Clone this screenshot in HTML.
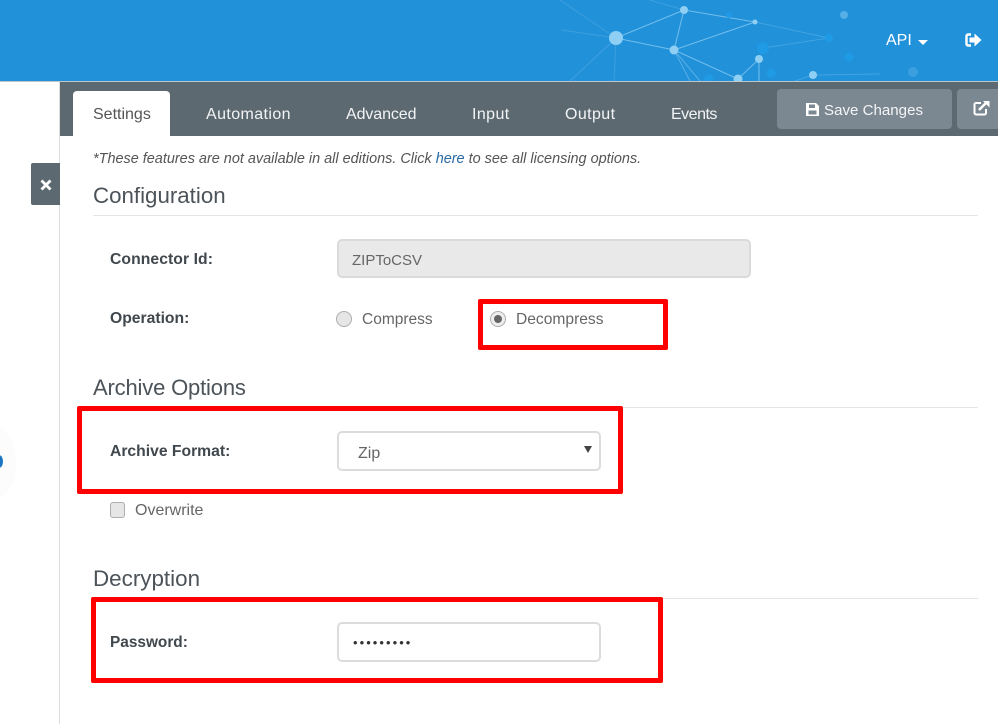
<!DOCTYPE html>
<html><head><meta charset="utf-8">
<style>
html,body{margin:0;padding:0;background:#fff}
#p{position:relative;width:998px;height:724px;overflow:hidden;background:#fff;font-family:"Liberation Sans",sans-serif;color:#555;filter:blur(.3px)}
#p div{position:absolute;box-sizing:border-box}
.t{white-space:nowrap;line-height:20px;font-size:16px}
.tab{color:#f2f4f5;top:105px}
.h{font-size:22px;line-height:26px;color:#4c5359;left:93px;white-space:nowrap}
.r{left:93px;width:885px;height:1px;background:#e2e4e6}
.b{font-weight:bold;color:#40474d;left:110px;font-size:15.7px;white-space:nowrap;line-height:20px}
.red{border:5px solid #fe0000;border-radius:2px}
.i{background:#fff;border:2px solid #dcdcdc;border-radius:5px}
</style></head><body>
<div id="p">
<div style="left:0;top:0;width:998px;height:81px;background:#2191d9"></div>
<svg style="position:absolute;left:0;top:0" width="998" height="81" viewBox="0 0 998 81">
<g stroke="#8fcdf2" fill="none">
<path d="M616 38L684 10L755 22L674 50L616 38M684 10L674 50L738 79M738 79L759 59V81" opacity=".75"/>
<path d="M674 50L690 81M674 50L700 81" opacity=".5"/>
<path d="M560 0L616 38L570 81M616 38L614 81M616 38L562 30M650 0L684 10" opacity=".25"/>
<path d="M763 48L829 38M813 75L880 74M813 75L795 81M755 22L829 38" opacity=".3"/>
</g>
<g fill="#1f9be6"><circle cx="763" cy="48" r="6"/><circle cx="771" cy="73" r="4.5"/><circle cx="729" cy="15" r="3"/><circle cx="709" cy="79" r="4.5"/><circle cx="829" cy="38" r="4"/><circle cx="849" cy="57" r="4.5"/></g>
<g fill="#8fcff3"><circle cx="616" cy="38" r="7"/><circle cx="684" cy="10" r="4"/><circle cx="755" cy="22" r="2.500"/><circle cx="674" cy="50" r="4.500"/><circle cx="738" cy="79" r="4.500"/><circle cx="759" cy="59" r="4"/><circle cx="813" cy="75" r="4"/></g>
<circle cx="844" cy="15" r="4" fill="#55aee6"/><circle cx="913" cy="72" r="5" fill="#3b9fdf"/>
</svg>
<div class="t" style="left:886px;top:31px;color:#fff">API</div>
<div style="left:918px;top:40px;width:0;height:0;border:5px solid transparent;border-top-color:#fff;border-bottom:0"></div>
<svg style="position:absolute;left:965px;top:33px" width="17" height="14" viewBox="0 0 17 14"><path d="M6 1.500H3A1.500 1.500 0 0 0 1.500 3V11A1.500 1.500 0 0 0 3 12.500H6" stroke="#fff" stroke-width="2.400" fill="none"/><path d="M4.500 4.500H9.500V.5L16.500 7L9.500 13.500V9.500H4.500Z" fill="#fff"/></svg>
<div style="left:0;top:81px;width:998px;height:1px;background:#bcc6cc"></div>
<div style="left:59px;top:82px;width:1px;height:642px;background:#dcdcdc"></div>
<div style="left:60px;top:82px;width:938px;height:54px;background:#5d6971"></div>
<div style="left:73px;top:91px;width:97px;height:45px;background:#fff;border-radius:4px 4px 0 0"></div>
<div class="t" style="left:93px;top:105px;color:#555">Settings</div>
<div class="t tab" style="left:206px;letter-spacing:.4px">Automation</div>
<div class="t tab" style="left:346px;letter-spacing:-.1px">Advanced</div>
<div class="t tab" style="left:472px;letter-spacing:.4px">Input</div>
<div class="t tab" style="left:565px;letter-spacing:.4px">Output</div>
<div class="t tab" style="left:671px;letter-spacing:-.5px">Events</div>
<div style="left:777px;top:89px;width:175px;height:40px;background:#7b8791;border-radius:4px"></div>
<div style="left:957px;top:89px;width:45px;height:40px;background:#7b8791;border-radius:4px"></div>
<svg style="position:absolute;left:805px;top:102px" width="15" height="15" viewBox="0 0 15 15"><path d="M1 1H11L14 4V14H1Z" fill="#fff"/><rect x="4" y="2.500" width="6" height="3.500" fill="#7b8791"/><rect x="3.500" y="8.500" width="8" height="4" fill="#7b8791"/></svg>
<div class="t" style="left:824px;top:101px;color:#f4f5f6;font-size:15.100px">Save Changes</div>
<svg style="position:absolute;left:973px;top:100px" width="17" height="16" viewBox="0 0 17 16"><path d="M8 3H3A1.500 1.500 0 0 0 1.500 4.500V13A1.500 1.500 0 0 0 3 14.500H11.500A1.500 1.500 0 0 0 13 13V9" stroke="#fff" stroke-width="2" fill="none"/><path d="M6 10L13 3" stroke="#fff" stroke-width="2.500"/><path d="M10 1H16.500V7.500Z" fill="#fff"/></svg>
<div style="left:31px;top:163px;width:29px;height:42px;background:#5d6971;border-radius:2px 0 0 2px"></div>
<svg style="position:absolute;left:40px;top:179px" width="12" height="12" viewBox="0 0 12 12"><path d="M1.500 1.500L10.500 10.500M10.500 1.500L1.500 10.500" stroke="#fff" stroke-width="2.800"/></svg>
<div style="left:-30px;top:425px;width:46px;height:75px;border-radius:50%;background:#fcfcfc"></div>
<div style="left:-5px;top:455px;width:8px;height:13px;border-radius:50%;background:#1b75c4"></div>
<div class="t" style="left:93px;top:149px;font-size:14.450px;font-style:italic;color:#555">*These features are not available in all editions. Click <span style="color:#2a6aa5">here</span> to see all licensing options.</div>
<div class="h" style="top:183px;font-size:22.300px">Configuration</div><div class="r" style="top:215px"></div>
<div class="b" style="top:250px;letter-spacing:.08px">Connector Id:</div>
<div style="left:337px;top:239px;width:414px;height:39px;background:#e9e9e9;border:2px solid #dadada;border-radius:5px"></div>
<div class="t" style="left:352px;top:251px;color:#666;font-size:15px">ZIPToCSV</div>
<div class="b" style="top:309px">Operation:</div>
<div style="left:336px;top:311px;width:16px;height:16px;border-radius:50%;background:#e6e6e6;border:1px solid #adadad"></div>
<div class="t" style="left:362px;top:310px;color:#666;font-size:15.500px">Compress</div>
<div style="left:490px;top:311px;width:16px;height:16px;border-radius:50%;background:#eee;border:1px solid #adadad"></div>
<div style="left:494px;top:315px;width:8px;height:8px;border-radius:50%;background:#666"></div>
<div class="t" style="left:516px;top:310px;color:#666;font-size:15.600px">Decompress</div>
<div class="red" style="left:478px;top:299px;width:190px;height:51px"></div>
<div class="h" style="top:375px;font-size:22px;letter-spacing:-.17px">Archive Options</div><div class="r" style="top:407px"></div>
<div class="red" style="left:77px;top:406px;width:546px;height:88px"></div>
<div class="b" style="top:442px">Archive Format:</div>
<div class="i" style="left:337px;top:431px;width:264px;height:40px"></div>
<div class="t" style="left:358px;top:444px;color:#666">Zip</div>
<div style="left:584px;top:446px;width:0;height:0;border:4px solid transparent;border-top:7px solid #444;border-bottom:0"></div>
<div style="left:110px;top:502px;width:15px;height:16px;background:#e6e6e6;border:1px solid #adadad;border-radius:3px"></div>
<div class="t" style="left:135px;top:501px;color:#666">Overwrite</div>
<div class="h" style="top:566px;font-size:22.400px">Decryption</div><div class="r" style="top:598px"></div>
<div class="red" style="left:91px;top:597px;width:572px;height:86px"></div>
<div class="b" style="top:633px;font-size:15.400px">Password:</div>
<div class="i" style="left:337px;top:622px;width:264px;height:40px"></div>
<div class="t" style="left:353px;top:633px;color:#333;font-size:13px;letter-spacing:2.050px">•••••••••</div>
</div>
</body></html>
